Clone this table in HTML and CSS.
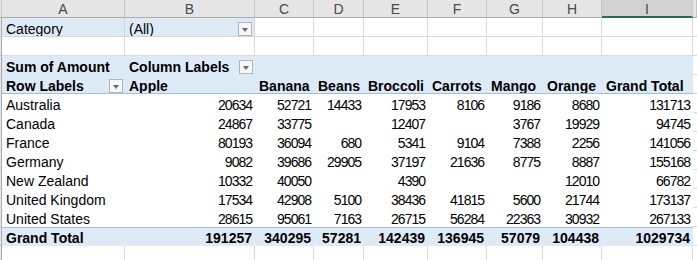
FILE: index.html
```html
<!DOCTYPE html>
<html lang="en">
<head>
  <meta charset="UTF-8">
  <title>Sales pivot</title>
  <link rel="stylesheet" href="styles.css">
</head>
<body>
  <div class="sheet">
    <!-- column letters -->
    <div class="row cols">
      <div></div><div>A</div><div>B</div><div>C</div><div>D</div><div>E</div><div>F</div><div>G</div><div>H</div><div class="sel">I</div><div></div>
    </div>

    <!-- report filter -->
    <div class="row">
      <div class="rh"></div>
      <div class="flt">Category</div>
      <div class="flt drop"><span>(All)</span><span class="dd"></span></div>
      <div class="g"></div><div class="g"></div><div class="g"></div><div class="g"></div><div class="g"></div><div class="g"></div><div class="g"></div><div class="g"></div>
    </div>
    <div class="row">
      <div class="rh"></div>
      <div class="g"></div><div class="g"></div><div class="g"></div><div class="g"></div><div class="g"></div><div class="g"></div><div class="g"></div><div class="g"></div><div class="g"></div><div class="g"></div>
    </div>

    <!-- pivot header -->
    <div class="row">
      <div class="rh"></div>
      <div class="pv b">Sum of Amount</div>
      <div class="pv b drop"><span>Column Labels</span><span class="dd"></span></div>
      <div class="pv"></div><div class="pv"></div><div class="pv"></div><div class="pv"></div><div class="pv"></div><div class="pv"></div><div class="pv"></div>
      <div class="g"></div>
    </div>
    <div class="row">
      <div class="rh"></div>
      <div class="pv b line drop"><span>Row Labels</span><span class="dd"></span></div>
      <div class="pv b line">Apple</div>
      <div class="pv b line">Banana</div>
      <div class="pv b line">Beans</div>
      <div class="pv b line">Broccoli</div>
      <div class="pv b line">Carrots</div>
      <div class="pv b line">Mango</div>
      <div class="pv b line">Orange</div>
      <div class="pv b line">Grand Total</div>
      <div class="g"></div>
    </div>

    <!-- rows -->
    <div class="row">
      <div class="rh"></div>
      <div>Australia</div>
      <div class="n">20634</div><div class="n">52721</div><div class="n">14433</div><div class="n">17953</div><div class="n">8106</div><div class="n">9186</div><div class="n">8680</div><div class="n">131713</div>
      <div class="g"></div>
    </div>
    <div class="row">
      <div class="rh"></div>
      <div>Canada</div>
      <div class="n">24867</div><div class="n">33775</div><div class="n"></div><div class="n">12407</div><div class="n"></div><div class="n">3767</div><div class="n">19929</div><div class="n">94745</div>
      <div class="g"></div>
    </div>
    <div class="row">
      <div class="rh"></div>
      <div>France</div>
      <div class="n">80193</div><div class="n">36094</div><div class="n">680</div><div class="n">5341</div><div class="n">9104</div><div class="n">7388</div><div class="n">2256</div><div class="n">141056</div>
      <div class="g"></div>
    </div>
    <div class="row">
      <div class="rh"></div>
      <div>Germany</div>
      <div class="n">9082</div><div class="n">39686</div><div class="n">29905</div><div class="n">37197</div><div class="n">21636</div><div class="n">8775</div><div class="n">8887</div><div class="n">155168</div>
      <div class="g"></div>
    </div>
    <div class="row">
      <div class="rh"></div>
      <div>New Zealand</div>
      <div class="n">10332</div><div class="n">40050</div><div class="n"></div><div class="n">4390</div><div class="n"></div><div class="n"></div><div class="n">12010</div><div class="n">66782</div>
      <div class="g"></div>
    </div>
    <div class="row">
      <div class="rh"></div>
      <div>United Kingdom</div>
      <div class="n">17534</div><div class="n">42908</div><div class="n">5100</div><div class="n">38436</div><div class="n">41815</div><div class="n">5600</div><div class="n">21744</div><div class="n">173137</div>
      <div class="g"></div>
    </div>
    <div class="row">
      <div class="rh"></div>
      <div>United States</div>
      <div class="n">28615</div><div class="n">95061</div><div class="n">7163</div><div class="n">26715</div><div class="n">56284</div><div class="n">22363</div><div class="n">30932</div><div class="n">267133</div>
      <div class="g"></div>
    </div>

    <!-- totals -->
    <div class="row">
      <div class="rh"></div>
      <div class="pv tot b">Grand Total</div>
      <div class="pv tot b nb">191257</div><div class="pv tot b nb">340295</div><div class="pv tot b nb">57281</div><div class="pv tot b nb">142439</div><div class="pv tot b nb">136945</div><div class="pv tot b nb">57079</div><div class="pv tot b nb">104438</div><div class="pv tot b nb">1029734</div>
      <div class="g"></div>
    </div>
    <div class="row">
      <div class="rh"></div>
      <div class="g"></div><div class="g"></div><div class="g"></div><div class="g"></div><div class="g"></div><div class="g"></div><div class="g"></div><div class="g"></div><div class="g"></div><div class="g"></div>
    </div>
  </div>
</body>
</html>
```

FILE: styles.css
```css
body {
    margin: 0;
    background: #fff;
    color: #000;
    font-family: "Liberation Sans", Arial, sans-serif;
    font-size: 14px;
    overflow: hidden;
}

.sheet {
    width: 697px;
}

.row {
    display: grid;
    grid-template-columns: 2px 123px 130px 59px 50px 64px 59px 56px 59px 91px 4px;
    height: 19px;
}

/* cells sit their text low, like bottom-aligned spreadsheet cells */
.row > div {
    box-sizing: border-box;
    padding: 2px 3px 0 4px;
    line-height: 18px;
    white-space: nowrap;
    overflow: hidden;
}

/* column letters */
.cols {
    height: 18px;
}

.row.cols > div {
    padding: 0;
    background: #e6e6e6;
    border-right: 1px solid #c6c6c6;
    border-bottom: 1px solid #ababab;
    color: #4a4a4a;
    text-align: center;
    line-height: 18px;
}

.row.cols > .sel {
    background: #d2d2d2;
    border-bottom: 2px solid #217346;
}

.row > .rh {
    padding: 0;
    background: #e6e6e6;
    border-right: 1px solid #ababab;
    border-bottom: 1px solid #c6c6c6;
}

/* plain grid cell */
.g {
    border-right: 1px solid #d9d9d9;
    border-bottom: 1px solid #d9d9d9;
}

.flt {
    background: #ddebf7;
    border-right: 1px solid #c9d8e6;
    border-bottom: 1px solid #d4d4d4;
}

.pv {
    background: #ddebf7;
}

.b {
    font-weight: bold;
}

.line {
    border-bottom: 1px solid #9bc2e6;
}

.tot {
    border-top: 1px solid #9bc2e6;
}

.row > .tot {
    padding-top: 1px;
}

.n,
.nb {
    text-align: right;
}

.n {
    letter-spacing: -1px;
}

.row > .drop {
    display: flex;
    justify-content: space-between;
    align-items: flex-start;
    padding-right: 2px;
}

.dd {
    position: relative;
    box-sizing: border-box;
    width: 14px;
    height: 14px;
    margin-top: 2px;
    background: #f7f7f7;
    border: 1px solid #b5b5b5;
}

.dd::after {
    content: "";
    position: absolute;
    left: 3px;
    top: 5px;
    border-width: 4px 3.5px 0;
    border-style: solid;
    border-color: #6a6a6a transparent transparent;
}
```
